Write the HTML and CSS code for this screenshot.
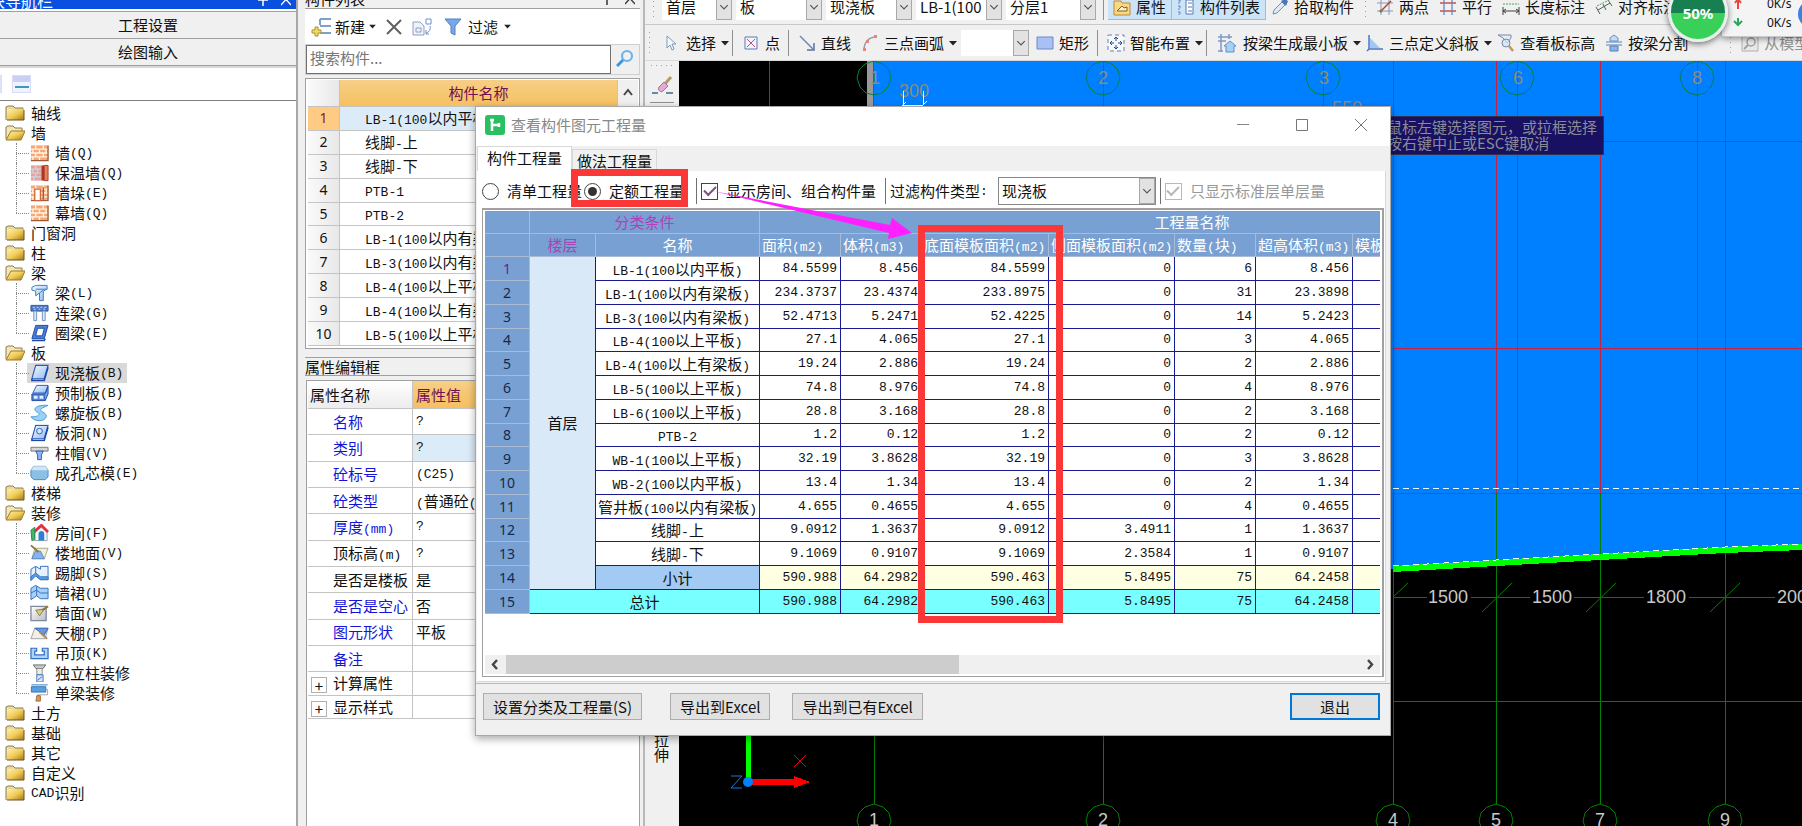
FILE: index.html
```html
<!DOCTYPE html>
<html lang="zh-CN">
<head>
<meta charset="utf-8">
<title>查看构件图元工程量</title>
<link rel="stylesheet" href="styles.css">
</head>
<body>
<svg class="defs" aria-hidden="true">
  <defs>
    <linearGradient id="gold" x1="0" y1="0" x2="1" y2="1"><stop offset="0" stop-color="#fff0a8"/><stop offset=".5" stop-color="#f0cc58"/><stop offset="1" stop-color="#a87818"/></linearGradient>
    <linearGradient id="sky" x1="0" y1="0" x2="1" y2="1"><stop offset="0" stop-color="#f4faff"/><stop offset="1" stop-color="#8fbcf0"/></linearGradient>
    <linearGradient id="grey" x1="0" y1="0" x2="1" y2="1"><stop offset="0" stop-color="#ffffff"/><stop offset="1" stop-color="#b8bcc8"/></linearGradient>
  </defs>
  <symbol id="folder" viewBox="0 0 20 16"><path d="M1 15V2l2-1h5l2 2h8v2" fill="#ead9a0" stroke="#8f7d48"/><path d="M2 4h17v11H2z" fill="url(#gold)"/><path d="M2 15h17V5" fill="none" stroke="#6f5418"/></symbol>
  <symbol id="open" viewBox="0 0 20 16"><path d="M1 14V2l2-1h5l2 2h7v4" fill="#f3e7b8" stroke="#8f7d48"/><path d="M1 15L6 6h14l-4 9z" fill="url(#gold)" stroke="#9a7a28"/></symbol>
  <symbol id="brick" viewBox="0 0 20 18"><path d="M1 1h18v16H1z" fill="#f5a873"/><path d="M1 5h18M1 9h18M1 13h18M6 1v4M14 1v4M3 5v4M10 5v4M17 5v4M6 9v4M14 9v4M3 13v4M10 13v4" stroke="#fff3e6" stroke-width="1.4"/><path d="M1 17h18V1" fill="none" stroke="#9a5c3c" stroke-width="1.4"/></symbol>
  <symbol id="brick2" viewBox="0 0 20 18"><path d="M1 1h11v16H1z" fill="#e0a5a0"/><path d="M1 5h11M1 9h11M1 13h11M6 1v4M3 5v4M8 5v4M6 9v4M4 13v4" stroke="#cfd6e4" stroke-width="1.3"/><path d="M12 1h3v16h-3z" fill="#b83018"/><path d="M15 1h4v16h-4z" fill="#e8805c" stroke="#a04028"/></symbol>
  <symbol id="brick3" viewBox="0 0 20 18"><use href="#brick"/><path d="M5 5h6v12H5z" fill="#fff" stroke="#d06838" stroke-width="1.4"/><path d="M14 3v13" stroke="#c05020" stroke-width="1.5"/></symbol>
  <symbol id="beam" viewBox="0 0 20 18"><path d="M2 3l4-2h12v4l-4 2v10h-4V9L6 12V7L2 6z" fill="url(#sky)" stroke="#3a7bc0"/><path d="M6 5h12M10 9l4-3" stroke="#3a7bc0"/></symbol>
  <symbol id="link" viewBox="0 0 20 18"><path d="M1 1h18v6H1z" fill="#4c78c4" stroke="#2c58a4"/><path d="M3 3h2m2 0h2m2 0h2m2 0h2M4 5h2m3 0h2m3 0h2" stroke="#cfe0ff"/><path d="M4 7h3v10H4zM13 7h3v10h-3z" fill="#dbe8fa" stroke="#7090c0"/></symbol>
  <symbol id="ring" viewBox="0 0 20 18"><path d="M6 1h13l-4 14H2z" fill="#4a7fd8" stroke="#1c48a8"/><path d="M8 4h7l-2 8H6z" fill="#fff" stroke="#1c48a8"/><path d="M2 17h13l1-2" fill="none" stroke="#1c48a8" stroke-width="1.6"/></symbol>
  <symbol id="slab" viewBox="0 0 20 18"><path d="M6 1h13l-4 14H2z" fill="url(#sky)" stroke="#2c58b8" stroke-width="1.2"/><path d="M2 15v2h13l4-14" fill="none" stroke="#1c48a8" stroke-width="1.6"/></symbol>
  <symbol id="precast" viewBox="0 0 20 18"><path d="M7 1h12l-3 8H3z" fill="url(#sky)" stroke="#2c58b8"/><path d="M2 10h14v7H2z" fill="#4d84d8" stroke="#1c48a8"/><path d="M16 10l3-8v8l-3 7" fill="#7ca8e8" stroke="#1c48a8"/><path d="M4 12h4v3H4zM10 12h4v3h-4z" fill="#e4f0ff"/></symbol>
  <symbol id="spiral" viewBox="0 0 20 18"><path d="M19 1C8 0 3 4 6 7c2 2 5 2 3 4-1 2-5 2-8 2 3 5 14 6 16 0 1-4-5-5-6-7 0-2 4-3 8-5z" fill="#9ad0f4" stroke="#4a98d0"/></symbol>
  <symbol id="hole" viewBox="0 0 20 18"><use href="#slab"/><ellipse cx="10" cy="7" rx="3" ry="3" fill="#d6e8fc" stroke="#2c58b8"/></symbol>
  <symbol id="cap" viewBox="0 0 20 18"><path d="M1 3h18v4H1z" fill="#d4d4d4" stroke="#787878"/><path d="M6 7h8l-2 4v5H8v-5z" fill="#8db8f0" stroke="#2c58b8"/></symbol>
  <symbol id="core" viewBox="0 0 20 18"><path d="M4 2h12l3 4v7l-3 3H4l-3-3V6z" fill="#8cbfe4" stroke="#5088b4"/><path d="M4 2h12l3 4H1z" fill="#cfe6f8"/></symbol>
  <symbol id="house" viewBox="0 0 20 18"><path d="M5 8v9h13V7l-6-6z" fill="#f4f6fa" stroke="#98a0b0"/><path d="M3 9l9-8 7 7" fill="none" stroke="#e03040" stroke-width="3"/><path d="M9 10c0-4 6-4 6 0v7H9z" fill="#2880d0"/><path d="M1 6l4-3v13l-3 1z" fill="#40b868" stroke="#288848"/></symbol>
  <symbol id="floor" viewBox="0 0 20 18"><path d="M5 4h14l-4 11H2z" fill="#f4f0d8" stroke="#a8a888"/><path d="M2 15h13l-4-8H6z" fill="#88b4ec" stroke="#5888c8"/><path d="M1 1l8 7" stroke="#907838" stroke-width="2"/></symbol>
  <symbol id="skirt" viewBox="0 0 20 18"><path d="M1 5l5-3v9l-5 5zM6 2l5 3V2h8v14h-8l-5-4" fill="#e8f2fe" stroke="#3070c0"/><path d="M1 13l5-4 5 4h8v3h-8l-5-4-5 5z" fill="#58a0e8" stroke="#3070c0"/></symbol>
  <symbol id="dado" viewBox="0 0 20 18"><path d="M1 4l5-3 5 3h8v11h-8l-4-3-6 4z" fill="#a8d0f8" stroke="#3070c0"/><path d="M1 9l6-3 4 3h8M7 2v10" fill="none" stroke="#3070c0"/></symbol>
  <symbol id="wallface" viewBox="0 0 20 18"><path d="M1 2h16v15H1z" fill="url(#grey)" stroke="#8088a0" stroke-width="1.4"/><path d="M6 6l9-1-5 7z" fill="#d8c888" stroke="#908040"/><path d="M13 6l6-4" stroke="#907838" stroke-width="2"/></symbol>
  <symbol id="ceiling" viewBox="0 0 20 18"><path d="M5 4h14l-3 11H1z" fill="#f0f0e8" stroke="#a0a0a0"/><path d="M5 4h14l-4 7z" fill="#6898e0" stroke="#3868b8"/><path d="M10 8l8 7" stroke="#a89058" stroke-width="2"/></symbol>
  <symbol id="hang" viewBox="0 0 20 18"><path d="M1 4h6v3H5v4h10V7h-2V4h6v11H1z" fill="#b0d4f8" stroke="#3070c0" stroke-width="1.3"/></symbol>
  <symbol id="column" viewBox="0 0 20 20"><path d="M3 1h14l-3 4H6z" fill="#c8c8c8" stroke="#686868"/><path d="M7 5h6v7H7z" fill="#ececec" stroke="#888"/><path d="M7 12h7v8H7z" fill="#d6e8fc" stroke="#3070c0"/><path d="M8 18l5-4" stroke="#3070c0"/></symbol>
  <symbol id="beamdec" viewBox="0 0 20 20"><path d="M1 1h18M1 3h16v6H1z" fill="#58a0e0" stroke="#2870b8"/><path d="M17 6h2v6H8v2" fill="none" stroke="#a0a0a0"/><path d="M7 13h4v6H6z" fill="#d89860" stroke="#a06830"/></symbol>
  <symbol id="chev" viewBox="0 0 16 16"><path d="M3 5.500l5 5 5-5" fill="none" stroke="#555" stroke-width="1.6"/></symbol>
  <symbol id="caret" viewBox="0 0 8 6"><path d="M0 1h8L4 5.500z" fill="#222"/></symbol>
</svg>

<div class="app">
  <aside class="nav">
    <header class="bluebar"><span class="bluebar-text">模块导航栏</span><span class="winmarks"><svg width="10" height="12" viewBox="0 0 10 12"><path d="M3 0v6M7 0v6M0 6h10M5 6v6" stroke="#fff" stroke-width="1.5"/></svg><svg width="10" height="12" viewBox="0 0 10 12"><path d="M0 0l10 11M10 0L0 11" stroke="#fff" stroke-width="1.3"/></svg></span></header>
    <button class="navbtn">工程设置</button>
    <button class="navbtn">绘图输入</button>
    <div class="navtools"><i class="sheet"></i><i class="sheet"></i></div>
    <ul class="tree">
      <li><svg class="f"><use href="#folder"/></svg>轴线</li>
      <li><svg class="f"><use href="#open"/></svg>墙</li>
      <li class="c"><svg><use href="#brick"/></svg>墙<span class="m">(Q)</span></li>
      <li class="c"><svg><use href="#brick2"/></svg>保温墙<span class="m">(Q)</span></li>
      <li class="c"><svg><use href="#brick3"/></svg>墙垛<span class="m">(E)</span></li>
      <li class="c last"><svg><use href="#brick"/></svg>幕墙<span class="m">(Q)</span></li>
      <li><svg class="f"><use href="#folder"/></svg>门窗洞</li>
      <li><svg class="f"><use href="#folder"/></svg>柱</li>
      <li><svg class="f"><use href="#open"/></svg>梁</li>
      <li class="c"><svg><use href="#beam"/></svg>梁<span class="m">(L)</span></li>
      <li class="c"><svg><use href="#link"/></svg>连梁<span class="m">(G)</span></li>
      <li class="c last"><svg><use href="#ring"/></svg>圈梁<span class="m">(E)</span></li>
      <li><svg class="f"><use href="#open"/></svg>板</li>
      <li class="c"><span class="sel"><svg><use href="#slab"/></svg>现浇板<span class="m">(B)</span></span></li>
      <li class="c"><svg><use href="#precast"/></svg>预制板<span class="m">(B)</span></li>
      <li class="c"><svg><use href="#spiral"/></svg>螺旋板<span class="m">(B)</span></li>
      <li class="c"><svg><use href="#hole"/></svg>板洞<span class="m">(N)</span></li>
      <li class="c"><svg><use href="#cap"/></svg>柱帽<span class="m">(V)</span></li>
      <li class="c last"><svg><use href="#core"/></svg>成孔芯模<span class="m">(E)</span></li>
      <li><svg class="f"><use href="#folder"/></svg>楼梯</li>
      <li><svg class="f"><use href="#open"/></svg>装修</li>
      <li class="c"><svg><use href="#house"/></svg>房间<span class="m">(F)</span></li>
      <li class="c"><svg><use href="#floor"/></svg>楼地面<span class="m">(V)</span></li>
      <li class="c"><svg><use href="#skirt"/></svg>踢脚<span class="m">(S)</span></li>
      <li class="c"><svg><use href="#dado"/></svg>墙裙<span class="m">(U)</span></li>
      <li class="c"><svg><use href="#wallface"/></svg>墙面<span class="m">(W)</span></li>
      <li class="c"><svg><use href="#ceiling"/></svg>天棚<span class="m">(P)</span></li>
      <li class="c"><svg><use href="#hang"/></svg>吊顶<span class="m">(K)</span></li>
      <li class="c"><svg><use href="#column"/></svg>独立柱装修</li>
      <li class="c last"><svg><use href="#beamdec"/></svg>单梁装修</li>
      <li><svg class="f"><use href="#folder"/></svg>土方</li>
      <li><svg class="f"><use href="#folder"/></svg>基础</li>
      <li><svg class="f"><use href="#folder"/></svg>其它</li>
      <li><svg class="f"><use href="#folder"/></svg>自定义</li>
      <li><svg class="f"><use href="#folder"/></svg><span class="m">CAD</span>识别</li>
    </ul>
  </aside>

  <section class="parts">
    <header class="greybar"><span>构件列表</span><span class="winmarks"><svg width="10" height="12" viewBox="0 0 10 12"><path d="M3 0v6M7 0v6M0 6h10M5 6v6" stroke="#333" stroke-width="1.5"/></svg><svg width="10" height="12" viewBox="0 0 10 12"><path d="M0 0l10 11M10 0L0 11" stroke="#333" stroke-width="1.3"/></svg></span></header>
    <div class="parttools">
      <button class="pt"><svg width="20" height="20" viewBox="0 0 20 20"><path d="M9 2h11M9 9h11M9 16h11M9 2v6" stroke="#7fa0c8" stroke-width="2" fill="none"/><path d="M4 10h3v3h3v3H7v3H4v-3H1v-3h3z" fill="#f5d860" stroke="#b09030"/></svg>新建<svg width="7" height="5"><use href="#caret"/></svg></button>
      <button class="pt" aria-label="删除"><svg width="16" height="16" viewBox="0 0 16 16"><path d="M1 1l14 14M15 1L1 15" stroke="#606060" stroke-width="2"/></svg></button>
      <button class="pt" aria-label="复制"><svg width="20" height="18" viewBox="0 0 20 18"><path d="M1 4h7l4 4v9H1z" fill="#eef2fa" stroke="#90a0c0"/><path d="M4 10h5v4H4z" fill="none" stroke="#90a0c0"/><path d="M14 1h5v5h-5zM18 8c1 4-1 6-4 7m0-3v4h3" fill="none" stroke="#7090c8"/></svg></button>
      <button class="pt"><svg width="18" height="18" viewBox="0 0 18 18"><path d="M1 1h16l-6 7v9l-4-2V8z" fill="#78a8e8" stroke="#5080c0"/></svg>过滤<svg width="7" height="5"><use href="#caret"/></svg></button>
    </div>
    <div class="search">
      <input type="text" placeholder="搜索构件..." aria-label="搜索构件">
      <button aria-label="搜索"><svg width="18" height="18" viewBox="0 0 18 18"><circle cx="11" cy="7" r="5" fill="none" stroke="#6cb4e8" stroke-width="2.200"/><path d="M7 11l-6 6" stroke="#3c98dc" stroke-width="3"/></svg></button>
    </div>
    <div class="listbox">
      <table class="list">
        <thead><tr><th class="n"></th><th class="gold">构件名称</th></tr></thead>
        <tbody>
          <tr class="cur"><th>1</th><td><span class="m">LB-1(100</span>以内平板<span class="m">)</span></td></tr>
          <tr><th>2</th><td>线脚<span class="m">-</span>上</td></tr>
          <tr><th>3</th><td>线脚<span class="m">-</span>下</td></tr>
          <tr><th>4</th><td><span class="m">PTB-1</span></td></tr>
          <tr><th>5</th><td><span class="m">PTB-2</span></td></tr>
          <tr><th>6</th><td><span class="m">LB-1(100</span>以内有梁板<span class="m">)</span></td></tr>
          <tr><th>7</th><td><span class="m">LB-3(100</span>以内有梁板<span class="m">)</span></td></tr>
          <tr><th>8</th><td><span class="m">LB-4(100</span>以上平板<span class="m">)</span></td></tr>
          <tr><th>9</th><td><span class="m">LB-4(100</span>以上有梁板<span class="m">)</span></td></tr>
          <tr><th>10</th><td><span class="m">LB-5(100</span>以上平板<span class="m">)</span></td></tr>
        </tbody>
      </table>
      <div class="vscroll"><svg width="16" height="26" viewBox="0 0 16 26"><path d="M4 15l4-5 4 5" fill="none" stroke="#444" stroke-width="2"/></svg><i></i></div>
    </div>
    <h2 class="proptitle">属性编辑框</h2>
    <div class="propbox">
      <table class="props">
        <thead><tr><th>属性名称</th><th class="gold">属性值</th></tr></thead>
        <tbody>
          <tr><th class="b">名称</th><td class="m">?</td></tr>
          <tr class="cur"><th class="b">类别</th><td class="m">?</td></tr>
          <tr><th class="b">砼标号</th><td class="m">(C25)</td></tr>
          <tr><th class="b">砼类型</th><td><span class="m">(</span>普通砼<span class="m">(</span>坍落度</td></tr>
          <tr><th class="b">厚度<span class="m">(mm)</span></th><td class="m">?</td></tr>
          <tr><th>顶标高<span class="m">(m)</span></th><td class="m">?</td></tr>
          <tr><th>是否是楼板</th><td>是</td></tr>
          <tr><th class="b">是否是空心</th><td>否</td></tr>
          <tr><th class="b">图元形状</th><td>平板</td></tr>
          <tr><th class="b">备注</th><td></td></tr>
          <tr class="grp"><th><button aria-label="展开计算属性">+</button>计算属性</th><td></td></tr>
          <tr class="grp"><th><button aria-label="展开显示样式">+</button>显示样式</th><td></td></tr>
        </tbody>
      </table>
    </div>
  </section>

  <main class="work">
    <div class="bar bar1">
      <i class="grip"></i>
      <span class="combo w70"><select aria-label="楼层"><option>首层</option></select><svg><use href="#chev"/></svg></span>
      <span class="combo w86"><select aria-label="构件大类"><option>板</option></select><svg><use href="#chev"/></svg></span>
      <span class="combo w86"><select aria-label="构件类型"><option>现浇板</option></select><svg><use href="#chev"/></svg></span>
      <span class="combo w86"><select aria-label="构件"><option>LB-1(100</option></select><svg><use href="#chev"/></svg></span>
      <span class="combo w90"><select aria-label="分层"><option>分层1</option></select><svg><use href="#chev"/></svg></span>
      <i class="sep"></i>
      <button class="tool on"><svg viewBox="0 0 18 18"><path d="M1 3h7l1 2h8v12H1z" fill="#f8d880" stroke="#c08830"/><path d="M4 13l5-5 2 2 3-1v4z" fill="#fff2c8" stroke="#80602c"/></svg>属性</button><button class="tool on"><svg viewBox="0 0 18 18"><path d="M2 1v16M2 3h3M2 9h3M2 15h3" stroke="#6080b8" stroke-dasharray="2 1" fill="none"/><path d="M9 2h7v14H9zM11 5h4M11 9h4M11 13h4" fill="#fff" stroke="#5878b8"/></svg>构件列表</button>
      <button class="tool"><svg viewBox="0 0 18 18"><path d="M2 16l1-4 8-8 3 3-8 8z" fill="#dce8f8" stroke="#7090b8"/><path d="M10 3l5 5 2-5-3-2z" fill="#4878b8"/></svg>拾取构件</button>
      <i class="grip mid"></i>
      <button class="tool"><svg viewBox="0 0 18 18"><path d="M5 1v16M13 1v16M1 5h16M1 13h16" stroke="#8898b8"/><path d="M4 14L15 3" stroke="#b04030" stroke-width="1.500"/><circle cx="5" cy="13" r="1.500" fill="#708040"/></svg>两点</button>
      <button class="tool"><svg viewBox="0 0 18 18"><path d="M1 5h16M1 13h16" stroke="#c05050" stroke-width="1.300"/><path d="M5 1v16M13 1v16" stroke="#6888c0" stroke-width="1.300"/></svg>平行</button>
      <button class="tool"><svg viewBox="0 0 18 18"><path d="M1 9v8M17 9v8M1 13h16M4 11l-3 2 3 2M14 11l3 2-3 2" stroke="#404040" fill="none"/><path d="M1 6h16" stroke="#50a060" stroke-dasharray="2 1"/></svg>长度标注</button>
      <button class="tool"><svg viewBox="0 0 18 18"><path d="M1 9l4 7M8 6l3 6M13 2l4 6M3 12l12-7" stroke="#506058" fill="none"/><path d="M2 8L16 1" stroke="#50a060" stroke-dasharray="2 1"/></svg>对齐标注</button>
    </div>
    <div class="bar bar2">
      <i class="grip"></i>
      <button class="tool drop"><svg viewBox="0 0 18 18"><path d="M4 2v12l3-3 2 5 2-1-2-5h4z" fill="#f4f8ff" stroke="#8098b8"/></svg>选择<svg class="car"><use href="#caret"/></svg></button>
      <i class="sep"></i>
      <button class="tool"><svg viewBox="0 0 18 18"><path d="M3 3h12v12H3z" fill="#f0f4ff" stroke="#6078b0"/><path d="M5 5l8 8M13 5l-8 8" stroke="#c05070"/></svg>点</button>
      <i class="sep"></i>
      <button class="tool"><svg viewBox="0 0 18 18"><path d="M2 2l13 13" stroke="#7088b0" stroke-width="1.500"/><path d="M16 9v7H9" fill="none" stroke="#5870a0" stroke-width="1.500"/></svg>直线</button>
      <button class="tool drop"><svg viewBox="0 0 18 18"><path d="M3 16C3 8 8 3 15 3" fill="none" stroke="#909cb4" stroke-width="1.500"/><path d="M2 14h3v3H2zM5 6h3v3H5zM13 1h3v3h-3z" fill="#e08880"/></svg>三点画弧<svg class="car"><use href="#caret"/></svg></button>
      <span class="combo w68"><select aria-label="画弧方式"><option></option></select><svg><use href="#chev"/></svg></span>
      <button class="tool"><svg viewBox="0 0 18 18"><path d="M1 3h16v12H1z" fill="#a8c0f4" stroke="#7088c8"/></svg>矩形</button>
      <i class="sep"></i>
      <button class="tool drop"><svg viewBox="0 0 18 18"><path d="M1 1h16v16H1z" fill="#f4f8ff" stroke="#7080a0" stroke-dasharray="4 3"/><path d="M9 3v4M9 11v4M3 9h4M11 9h4" stroke="#304870"/><path d="M7 5l2-2 2 2M7 13l2 2 2-2M5 7L3 9l2 2M13 7l2 2-2 2" stroke="#304870" fill="none"/></svg>智能布置<svg class="car"><use href="#caret"/></svg></button>
      <i class="sep"></i>
      <button class="tool drop wide"><svg viewBox="0 0 22 20"><path d="M2 4h14M2 8h8M5 1v18M2 18h5M13 1v5" stroke="#8098c8" fill="none" stroke-width="1.500"/><path d="M8 13l6-5 6 5-2 0v6h-8v-6z" fill="#a8d0f4" stroke="#5890c8"/></svg>按梁生成最小板<svg class="car"><use href="#caret"/></svg></button>
      <button class="tool drop"><svg viewBox="0 0 18 18"><path d="M3 1v14h14M3 15l-2 2" stroke="#4878c0" fill="none" stroke-width="1.500"/><path d="M4 4l10 10H4z" fill="#a0c8f0"/></svg>三点定义斜板<svg class="car"><use href="#caret"/></svg></button>
      <button class="tool"><svg viewBox="0 0 18 18"><path d="M1 1h13v3l-4 5-4-5z" fill="#e4ecf8" stroke="#7888a8"/><circle cx="9" cy="9" r="4" fill="#d0e4f8" fill-opacity=".7" stroke="#7888a8"/><path d="M12 12l4 5" stroke="#c09860" stroke-width="2.500"/></svg>查看板标高</button>
      <button class="tool"><svg viewBox="0 0 18 18"><path d="M5 4l4-3 4 3v3H5z" fill="#c4dcf4" stroke="#6890c0"/><path d="M1 8h16M1 11h16" stroke="#5880b8"/><path d="M5 12h8v5H5z" fill="#88b4e8" stroke="#5880b8"/></svg>按梁分割</button>
      <i class="grip far"></i>
      <button class="tool" disabled><svg viewBox="0 0 18 18"><path d="M1 1h16v16H1z" fill="#e8e8e8" stroke="#b0b0b0"/><circle cx="10" cy="8" r="4" fill="none" stroke="#a0a0a0" stroke-width="1.500"/><path d="M7 11l-4 4" stroke="#a0a0a0" stroke-width="2"/></svg>从模型</button>
    </div>
    <div class="stage">
      <div class="side">
        <i class="hgrip"></i>
        <svg width="22" height="20" viewBox="0 0 22 20"><path d="M20 1l-7 8" stroke="#b0a060" stroke-width="3"/><path d="M8 11l5-5 4 4-5 5c-2 2-6-1-4-4z" fill="#e8a8d0" stroke="#9078a0"/><path d="M1 17h6M15 17h7" stroke="#6888a8" stroke-width="2"/></svg>
        <i class="hsep"></i>
        <span class="stretch">拉伸</span>
      </div>
      <svg class="canvas" viewBox="679 61 1123 765" preserveAspectRatio="xMinYMin slice" shape-rendering="crispEdges">
        <rect x="679" y="61" width="1123" height="765" fill="#000"/>
        <path d="M873 61H1802V545L1725 549L1600 557L1496 563L1393 569L873 605z" fill="#0080ff"/>
        <rect x="867" y="61" width="6" height="500" fill="#999"/>
        <path d="M1393 61V493M1496 61V493M1517 61V493M1600 61V493M1697 61V493M1725 61V493M1323 61V493M1103 61V493M873 61V493M1393 141H1802M1393 348H1802M1393 493H1802" stroke="#c82040" fill="none"/>
        <path d="M769 61V600M874 700V804M1103 700V804M1393 493V804M1496 493V804M1600 493V804M1725 493V804M1393 597H1427M1471 597H1530M1574 597H1644M1689 597H1775M1393 701H1802" stroke="#008000" fill="none"/>
        <path d="M1393 569L1496 563L1600 557L1725 550L1802 547" fill="none" stroke="#0f0" stroke-width="6"/>
        <path d="M1393 566L1496 560L1600 554L1725 547L1802 544M1393 488H1802" fill="none" stroke="#e8ffff" stroke-dasharray="6 4"/>
        <g fill="none" stroke="#008040" shape-rendering="auto">
          <path id="oct" d="M874 61l9 3 6 6 2 8-3 9-6 6-8 2-8-2-6-6-3-9 2-8 6-6z"/>
          <use href="#oct" x="229"/><use href="#oct" x="449"/><use href="#oct" x="643"/><use href="#oct" x="823"/>
        </g>
        <g fill="none" stroke="#008000" shape-rendering="auto">
          <use href="#oct" y="743"/><use href="#oct" x="229" y="743"/><use href="#oct" x="519" y="743"/><use href="#oct" x="622" y="743"/><use href="#oct" x="726" y="743"/><use href="#oct" x="851" y="743"/>
          <path d="M1393 597l15-14M1482 612l30-29M1586 612l30-29M1710 612l30-29"/>
        </g>
        <g class="cad" text-anchor="middle">
          <text x="1448" y="603">1500</text><text x="1552" y="603">1500</text><text x="1666" y="603">1800</text><text x="1792" y="603">200</text>
          <text x="874" y="826">1</text><text x="1103" y="826">2</text><text x="1393" y="826">4</text><text x="1496" y="826">5</text><text x="1600" y="826">7</text><text x="1725" y="826">9</text>
        </g>
        <g class="cad dim" text-anchor="middle">
          <text x="875" y="84">1</text><text x="1103" y="84">2</text><text x="1324" y="84">3</text><text x="1518" y="84">6</text><text x="1697" y="84">8</text><text x="914" y="97">300</text><text x="1347" y="114">550</text>
        </g>
        <path d="M903 91v14M923 91v14M900 108l6-6M920 108l7-7M903 105h20" stroke="#fff" fill="none"/>
        <path d="M748 700V781" stroke="#0f0" stroke-width="5"/>
        <path d="M752 779h42v-3l16 6-16 6v-3h-42z" fill="#f00"/>
        <circle cx="748" cy="782" r="5" fill="#0080ff" shape-rendering="auto"/>
        <path d="M794 755l12 12M806 755l-12 12" stroke="#e00020" shape-rendering="auto"/>
        <path d="M731 776h11l-11 12h11" stroke="#1878d8" fill="none" shape-rendering="auto"/>
      </svg>
      <div class="tip">鼠标左键选择图元，或拉框选择<br>按右键中止或ESC键取消</div>
    </div>
  </main>
</div>

<div class="net">
  <svg width="12" height="37" viewBox="0 0 12 37"><path d="M6 9V1M3 3l3-4 3 4" stroke="#e84840" stroke-width="2" fill="none"/><path d="M6 18v7M2 21l4 4 4-4" stroke="#28a858" stroke-width="2" fill="none"/></svg>
  <span>0K/s<br>0K/s</span><i></i>
</div>
<div class="ball">50%</div>

<div class="dialog" role="dialog" aria-label="查看构件图元工程量">
  <header class="dtitle">
    <svg width="20" height="20" viewBox="0 0 20 20"><rect width="20" height="20" rx="3" fill="#28c060"/><path d="M7 4v12M7 10h8M5 5h4M14 8v4" stroke="#fff" stroke-width="2.500"/></svg>
    <span>查看构件图元工程量</span>
    <button aria-label="最小化"><svg width="12" height="12" viewBox="0 0 12 12"><path d="M0 5.500h12" stroke="#888"/></svg></button>
    <button aria-label="最大化"><svg width="12" height="12" viewBox="0 0 12 12"><path d="M.5.5h11v11H.5z" fill="none" stroke="#777"/></svg></button>
    <button aria-label="关闭"><svg width="12" height="12" viewBox="0 0 12 12"><path d="M0 0l12 12M12 0L0 12" stroke="#777"/></svg></button>
  </header>
  <nav class="tabs"><button class="active">构件工程量</button><button>做法工程量</button></nav>
  <div class="pane">
    <div class="opts">
      <label class="r1"><input type="radio" name="kind">清单工程量</label>
      <label class="r2"><input type="radio" name="kind" checked>定额工程量</label>
      <i class="osep"></i>
      <label class="k1"><input type="checkbox" checked>显示房间、组合构件量</label>
      <i class="osep"></i>
      <label class="ftype" for="ftype">过滤构件类型<span class="m">:</span></label>
      <span class="combo big"><select id="ftype"><option>现浇板</option></select><svg><use href="#chev"/></svg></span>
      <i class="osep"></i>
      <label class="k2"><input type="checkbox" checked disabled>只显示标准层单层量</label>
    </div>
    <div class="gridbox">
      <div class="gridclip">
      <table class="grid">
        <colgroup><col class="c0"><col class="c1"><col class="c2"><col class="c3"><col class="c3"><col class="c5"><col class="c6"><col class="c3"><col class="c8"><col></colgroup>
        <thead>
          <tr><th></th><th colspan="2" class="p">分类条件</th><th colspan="7">工程量名称</th></tr>
          <tr><th></th><th class="p">楼层</th><th>名称</th><th class="l">面积<span class="m">(m2)</span></th><th class="l">体积<span class="m">(m3)</span></th><th class="l">底面模板面积<span class="m">(m2)</span></th><th class="l">侧面模板面积<span class="m">(m2)</span></th><th class="l">数量<span class="m">(</span>块<span class="m">)</span></th><th class="l">超高体积<span class="m">(m3)</span></th><th class="l">模板面积<span class="m">(m2)</span></th></tr>
        </thead>
        <tbody>
          <tr><th class="first">1</th><td rowspan="14" class="floor">首层</td><td class="nm"><span class="m">LB-1(100</span>以内平板<span class="m">)</span></td><td>84.5599</td><td>8.456</td><td>84.5599</td><td>0</td><td>6</td><td>8.456</td><td></td></tr>
          <tr><th>2</th><td class="nm"><span class="m">LB-1(100</span>以内有梁板<span class="m">)</span></td><td>234.3737</td><td>23.4374</td><td>233.8975</td><td>0</td><td>31</td><td>23.3898</td><td></td></tr>
          <tr><th>3</th><td class="nm"><span class="m">LB-3(100</span>以内有梁板<span class="m">)</span></td><td>52.4713</td><td>5.2471</td><td>52.4225</td><td>0</td><td>14</td><td>5.2423</td><td></td></tr>
          <tr><th>4</th><td class="nm"><span class="m">LB-4(100</span>以上平板<span class="m">)</span></td><td>27.1</td><td>4.065</td><td>27.1</td><td>0</td><td>3</td><td>4.065</td><td></td></tr>
          <tr><th>5</th><td class="nm"><span class="m">LB-4(100</span>以上有梁板<span class="m">)</span></td><td>19.24</td><td>2.886</td><td>19.24</td><td>0</td><td>2</td><td>2.886</td><td></td></tr>
          <tr><th>6</th><td class="nm"><span class="m">LB-5(100</span>以上平板<span class="m">)</span></td><td>74.8</td><td>8.976</td><td>74.8</td><td>0</td><td>4</td><td>8.976</td><td></td></tr>
          <tr><th>7</th><td class="nm"><span class="m">LB-6(100</span>以上平板<span class="m">)</span></td><td>28.8</td><td>3.168</td><td>28.8</td><td>0</td><td>2</td><td>3.168</td><td></td></tr>
          <tr><th>8</th><td class="nm"><span class="m">PTB-2</span></td><td>1.2</td><td>0.12</td><td>1.2</td><td>0</td><td>2</td><td>0.12</td><td></td></tr>
          <tr><th>9</th><td class="nm"><span class="m">WB-1(100</span>以上平板<span class="m">)</span></td><td>32.19</td><td>3.8628</td><td>32.19</td><td>0</td><td>3</td><td>3.8628</td><td></td></tr>
          <tr><th>10</th><td class="nm"><span class="m">WB-2(100</span>以内平板<span class="m">)</span></td><td>13.4</td><td>1.34</td><td>13.4</td><td>0</td><td>2</td><td>1.34</td><td></td></tr>
          <tr><th>11</th><td class="nm">管井板<span class="m">(100</span>以内有梁板<span class="m">)</span></td><td>4.655</td><td>0.4655</td><td>4.655</td><td>0</td><td>4</td><td>0.4655</td><td></td></tr>
          <tr><th>12</th><td class="nm">线脚<span class="m">-</span>上</td><td>9.0912</td><td>1.3637</td><td>9.0912</td><td>3.4911</td><td>1</td><td>1.3637</td><td></td></tr>
          <tr><th>13</th><td class="nm">线脚<span class="m">-</span>下</td><td>9.1069</td><td>0.9107</td><td>9.1069</td><td>2.3584</td><td>1</td><td>0.9107</td><td></td></tr>
          <tr class="sub"><th>14</th><td class="nm">小计</td><td>590.988</td><td>64.2982</td><td>590.463</td><td>5.8495</td><td>75</td><td>64.2458</td><td></td></tr>
          <tr class="tot"><th>15</th><td colspan="2" class="nm">总计</td><td>590.988</td><td>64.2982</td><td>590.463</td><td>5.8495</td><td>75</td><td>64.2458</td><td></td></tr>
        </tbody>
      </table>
      </div>
      <div class="hscroll"><svg width="21" height="19" viewBox="0 0 21 19"><path d="M12 5l-4 4.500 4 4.500" fill="none" stroke="#444" stroke-width="2.400"/></svg><i></i><svg width="21" height="19" viewBox="0 0 21 19"><path d="M9 5l4 4.500-4 4.500" fill="none" stroke="#444" stroke-width="2.400"/></svg></div>
    </div>
  </div>
  <footer class="dfoot">
    <button class="b1">设置分类及工程量(S)</button><button class="b2">导出到Excel</button><button class="b3">导出到已有Excel</button><button class="exit">退出</button>
  </footer>
  <svg class="marks" width="916" height="629" viewBox="475 106 916 629">
    <path d="M713 191L890 225L892 218L912 233L888 239L889 233z" fill="#ff20ff"/>
    <rect x="574.5" y="172.500" width="110" height="31" fill="none" stroke="#fa3838" stroke-width="7"/>
    <rect x="921.5" y="228.500" width="138" height="391" fill="none" stroke="#fa3838" stroke-width="7"/>
  </svg>
</div>
</body>
</html>
```

FILE: styles.css
```css
* { box-sizing: border-box; }
html, body { height: 100%; margin: 0; }
body {
  overflow: hidden;
  position: relative;
  background: #f0f0f0;
  color: #111;
  font: 15px/20px "Noto Sans CJK SC", sans-serif;
}
button, input, select { font: inherit; color: inherit; margin: 0; padding: 0; border: 0; background: none; border-radius: 0; }
th { font-weight: 400; }
i { display: block; flex: none; }
svg { flex: none; }
.defs { position: absolute; width: 0; height: 0; }
.m { font-family: "Liberation Mono", monospace; font-size: 13px; line-height: 1; }

.app { display: grid; grid-template-columns: 298px 347px minmax(0, 1fr); height: 100vh; }

/* navigation tree */
.nav { background: #fff; border-right: 2px solid #a8a8a8; overflow: hidden; }
.bluebar { display: flex; justify-content: space-between; align-items: flex-end; height: 9px; background: #0a50e0; color: #fff; overflow: hidden; }
.bluebar-text { display: flex; justify-content: flex-end; width: 53px; white-space: nowrap; font-size: 16px; line-height: 18px; }
.winmarks { display: flex; gap: 13px; padding: 0 5px 3px 0; }
.navbtn { display: block; width: 100%; height: 27px; background: #f0f0f0; border-bottom: 1px solid #a0a0a0; }
.bluebar + .navbtn { border-top: 1px solid #a0a0a0; margin-top: 2px; height: 28px; }
.navtools { display: flex; gap: 10px; height: 35px; margin-left: -17px; padding-top: 7px; border-top: 2px solid #d8d8d8; border-bottom: 1px solid #808080; }
.sheet { width: 19px; height: 18px; background: linear-gradient(transparent 10px, #3c98c0 10px, #3c98c0 12px, transparent 12px) 2px 0 / 14px 18px no-repeat, linear-gradient(#c8d0f4 6px, transparent 6px), #f0f3ff; border: 1px solid #d8dcf4; }
.sheet:first-child { background: #e0e4f8; }
.tree { list-style: none; margin: 0; padding: 2px 0 0; }
.tree li { display: flex; align-items: center; height: 20px; padding-left: 5px; position: relative; white-space: nowrap; }
.tree li > svg, .sel svg { width: 19px; height: 18px; margin-right: 6px; }
.tree li > svg.f { width: 20px; height: 16px; }
.tree li.c { padding-left: 30px; }
.tree li.c::before { content: ""; position: absolute; left: 16px; top: 0; height: 20px; border-left: 1px dotted #888; }
.tree li.last::before { height: 10px; }
.tree li.c::after { content: ""; position: absolute; left: 16px; top: 10px; width: 13px; border-top: 1px dotted #888; }
.sel { display: flex; align-items: center; height: 20px; margin-left: -3px; padding: 0 4px 0 3px; background: #d9d9d9; }

/* component list and properties */
.parts { display: flex; flex-direction: column; padding: 0 3px 0 7px; background: #f0f0f0; border-right: 2px solid #b8b8b8; min-height: 0; }
.greybar { display: flex; flex: none; justify-content: space-between; align-items: flex-end; height: 9px; overflow: hidden; border-bottom: 1px solid #a0a0a0; }
.greybar > span:first-child { line-height: 18px; }
.parttools { display: flex; align-items: center; gap: 10px; height: 35px; padding: 0 6px; background: #fff; }
.pt { display: flex; align-items: center; gap: 4px; }
.pt:last-child { margin-left: 2px; gap: 6px; }
.search { display: flex; height: 31px; border: 1px solid #d0d0d0; }
.search input { flex: 1; min-width: 0; padding: 0 3px 4px; background: #fff; border: 1px solid #707070; }
.search input::placeholder { color: #777; opacity: 1; }
.search button { width: 28px; }
.listbox { display: flex; flex: none; height: 271px; margin-top: 3px; padding: 1px 1px 1px 2px; background: #fff; border: 1px solid #a0a0a0; overflow: hidden; }
.list { flex: 1; height: 266px; table-layout: fixed; border-spacing: 0; white-space: nowrap; }
.list th, .list td { padding: 0; border-right: 1px solid #c4c4c4; border-bottom: 1px solid #c4c4c4; }
.list th { background: linear-gradient(90deg, #fafafa, #e8e8e8); font: 14px/18px "Noto Sans", sans-serif; }
.list .n { width: 32px; }
.list thead th { height: 27px; }
.gold, .list th.gold { background: linear-gradient(#f7cf86, #f5c060); color: #701050; font: 15px/20px "Noto Sans CJK SC", sans-serif; }
.list td { padding-left: 25px; overflow: hidden; line-height: 18px; }
.list .cur th { background: #ffcb84; color: #802030; }
.cur td { background: #dcebf8; }
.vscroll { width: 20px; background: #f0f0f0; }
.vscroll i { height: 120px; margin: 0 1px; background: #cdcdcd; }
.vscroll svg { display: block; margin: 0 auto; }
.proptitle { flex: none; margin: 8px 0 0; height: 19px; font-size: 15px; line-height: 17px; font-weight: 400; border: solid #a0a0a0; border-width: 1px 0; }
.propbox { flex: 1; min-height: 0; margin: 4px 0 0 1px; padding: 0 1px; background: #fff; border: 1px solid #a0a0a0; border-bottom: 0; }
.props { width: 100%; height: 338px; table-layout: fixed; border-spacing: 0; white-space: nowrap; }
.props th, .props td { padding: 0 0 0 3px; height: 26px; text-align: left; border-right: 1px solid #c4c4c4; border-bottom: 1px solid #c4c4c4; overflow: hidden; }
.props th:first-child { width: 105px; }
.props thead th { height: 28px; }
.props thead th:first-child { padding-left: 2px; background: linear-gradient(#fff, #ececec); }
.props tbody th { padding-left: 25px; }
.props th.b { color: #1414d8; }
.props .grp th, .props .grp td { height: 23px; padding-left: 3px; }
.grp button { width: 16px; height: 16px; margin-right: 6px; line-height: 13px; border: 1px solid #b0b0b0; vertical-align: middle; }

/* toolbars */
.work { display: flex; flex-direction: column; min-width: 0; }
.bar { display: flex; flex: none; overflow: hidden; white-space: nowrap; background: #f0f0f0; }
.bar > * { flex: none; }
.bar1 { height: 25px; align-items: flex-end; padding: 0 0 4px 7px; border-bottom: 1px solid #c8c8c8; }
.bar2 { height: 36px; align-items: center; padding-left: 3px; border-bottom: 1px solid #d8d8d8; }
.grip { width: 3px; height: 26px; margin-right: 7px; background: radial-gradient(circle, #a0a0a0 1px, transparent 1px) 0 0 / 3px 5px; }
.grip.mid { margin: 0 4px 0 5px; }
.bar2 .grip.far { margin: 0 4px 0 36px; }
.combo { display: inline-flex; height: 26px; margin-right: 4px; background: #fff; }
.combo select { flex: 1; min-width: 0; padding: 0 0 0 4px; appearance: none; background: #fff; line-height: 20px; overflow: hidden; }
.combo svg { width: 16px; height: 100%; padding: 0 1px; background: #e2e2e2; border: 1px solid #a8a8a8; pointer-events: none; }
.w68 { width: 68px; margin: 0 2px 0 4px; }
.w70 { width: 70px; }
.w86 { width: 86px; }
.w90 { width: 90px; }
.sep { width: 1px; height: 26px; margin: 0 4px 0 3px; background: #909090; }
.tool { display: inline-flex; align-items: center; gap: 5px; height: 26px; padding: 0 5px; }
.tool svg { width: 18px; height: 18px; }
.tool.wide svg:first-child { width: 22px; height: 20px; }
.tool.drop { padding-right: 0; }
.tool svg.car { width: 8px; height: 6px; }
.tool.on { background: #cce4f8; border: solid #90c0e8; border-width: 0 1px 1px 0; }
.tool:disabled { color: #909090; }

/* drawing area */
.stage { position: relative; display: flex; flex: 1; min-height: 0; }
.side { display: flex; flex: none; flex-direction: column; align-items: center; width: 34px; padding-top: 3px; background: #f0f0f0; }
.hgrip { width: 26px; height: 3px; margin-bottom: 9px; background: radial-gradient(circle, #a0a0a0 1px, transparent 1px) 0 0 / 5px 3px; }
.hsep { width: 24px; height: 1px; margin-top: 6px; background: #909090; }
.stretch { width: 16px; margin-top: 629px; line-height: 15px; }
.canvas { flex: 1; min-width: 0; width: 100%; height: 100%; display: block; }
.cad { font: 18px "Liberation Sans", sans-serif; fill: #c8c8c8; }
.dim { fill: #8f8a78; }
.tip { position: absolute; left: 737px; top: 55px; padding: 2px 6px 3px 4px; font-size: 15px; line-height: 16px; color: #8c8c98; background: #181060; border: 1px solid #303050; white-space: nowrap; }

/* network widget */
.net { position: absolute; right: 0; top: 0; display: flex; width: 80px; height: 37px; padding-left: 10px; overflow: hidden; background: #f4f4f4; border-bottom: 1px solid #c8c8c8; box-shadow: 0 2px 6px #0006; font: 12px/19px "Noto Sans", sans-serif; }
.net span { margin: -6px 0 0 23px; }
.net i { width: 28px; height: 28px; margin-left: 6px; border-radius: 50%; background: #3c80e0; }
.ball { position: absolute; right: 74px; top: -18px; width: 60px; height: 60px; border: 3px solid #e8f0ec; border-radius: 50%; background: linear-gradient(#188050 28px, #38d058 28px); color: #fff; font: 700 15px/56px "Noto Sans", sans-serif; text-align: center; box-shadow: 0 2px 6px #0008; }

/* quantity dialog */
.dialog { position: absolute; left: 475px; top: 106px; width: 916px; background: #f0f0f0; border: 1px solid #a8a8a8; box-shadow: 0 3px 8px #0005; }
.dtitle { display: flex; align-items: center; height: 39px; padding: 0 6px 4px 9px; background: #fff; color: #888; }
.dtitle span { flex: 1; margin-left: 6px; }
.dtitle button { display: flex; align-items: center; justify-content: center; width: 59px; height: 28px; }
.dtitle button:last-child { width: 46px; margin-left: 7px; }
.tabs { display: flex; align-items: flex-end; height: 25px; padding-left: 1px; }
.tabs button { height: 22px; padding: 0 4px; line-height: 20px; border: 1px solid #d8d8d8; border-bottom: 0; }
.tabs .active { height: 25px; padding: 0 9px 3px; background: #fff; }
.pane { margin: 0 4px 0 1px; padding: 0 1px 4px 5px; background: #fff; border-right: 1px solid #d8d8d8; border-bottom: 1px solid #d8d8d8; }
.opts { display: flex; align-items: center; height: 37px; padding-top: 3px; white-space: nowrap; }
.opts label { display: flex; align-items: center; gap: 8px; }
.opts .r2 { margin-left: 2px; }
.opts .k2 { color: #989898; }
.opts .ftype { gap: 0; margin-left: 4px; }
.opts input { appearance: none; display: grid; place-items: center; flex: none; background: #fff; border: 1px solid #444; }
.opts input[type=radio] { width: 17px; height: 17px; border-radius: 50%; }
.opts input[type=radio]:checked::after { content: ""; width: 9px; height: 9px; border-radius: 50%; background: #333; }
.opts input[type=checkbox] { width: 17px; height: 17px; }
.opts input[type=checkbox]:checked::after { content: ""; width: 10px; height: 5px; margin-top: -3px; border: solid #805080; border-width: 0 0 2px 2px; rotate: -45deg; }
.opts input:disabled { border-color: #b8b8b8; }
.opts input[type=checkbox]:disabled::after { border-color: #b8b8b8; }
.osep { width: 1px; height: 26px; background: #707070; }
.opts .r2 + .osep { margin-left: 12px; }
.k1 { margin: 0 9px 0 4px; }
.combo.big { width: 158px; height: 28px; margin: 0 4px 0 10px; border: 1px solid #888; }
.combo.big select { padding-left: 3px; }
.k2 { margin-left: 4px; }
.gridbox { padding: 1px 2px 2px; border: 1px solid #a0a0a0; border-width: 2px 2px 1px 1px; }
.gridclip { height: 444px; overflow: hidden; }
.grid { width: 1140px; table-layout: fixed; border-spacing: 0; white-space: nowrap; line-height: 20px; }
.grid tr { height: 24px; }
.grid thead tr { height: 23px; }
.grid tbody tr:nth-child(4n) { height: 23px; }
.c0 { width: 45px; }
.c1 { width: 66px; }
.c2 { width: 164px; }
.c3 { width: 81px; }
.c5 { width: 127px; }
.c6 { width: 126px; }
.c8 { width: 97px; }
.grid th { padding: 0; background: #78a0d2; color: #fff; border-right: 1px solid #a9bcd4; border-bottom: 1px solid #a9bcd4; overflow: hidden; }
.grid th.p { color: #b040b8; }
.grid th.l { text-align: left; padding-left: 2px; }
.grid tbody th { color: #182848; font: 14px/20px "Noto Sans", sans-serif; }
.grid tbody th.first { color: #701890; }
.grid td { padding: 0 3px 0 0; text-align: right; font-family: "Liberation Mono", monospace; font-size: 13px; background: #fff; border-right: 1px solid #1a1a90; border-bottom: 1px solid #1a1a90; }
.grid td.nm, .grid td.floor { padding: 0; text-align: center; font: 15px/20px "Noto Sans CJK SC", sans-serif; }
.grid td.floor { background: #d9e9f8; }
.sub td { background: #ffffe1; }
.grid .sub td.nm { background: #a2caf2; }
.grid .tot td { background: #78ffff; }
.hscroll { display: flex; height: 19px; background: #f0f0f0; }
.hscroll i { width: 453px; margin-right: auto; background: #cdcdcd; }
.dfoot { display: flex; height: 52px; margin-top: 1px; padding: 9px 10px 0 7px; border-top: 1px solid #b8b8b8; }
.dfoot button { height: 27px; padding: 0 9px; background: #e1e1e1; border: 1px solid #adadad; line-height: 22px; white-space: nowrap; }
.dfoot .b2 { margin: 0 22px 0 28px; }
.dfoot .exit { width: 90px; margin-left: auto; border: 2px solid #0078d7; }
.marks { position: absolute; left: -1px; top: -1px; pointer-events: none; }
```
